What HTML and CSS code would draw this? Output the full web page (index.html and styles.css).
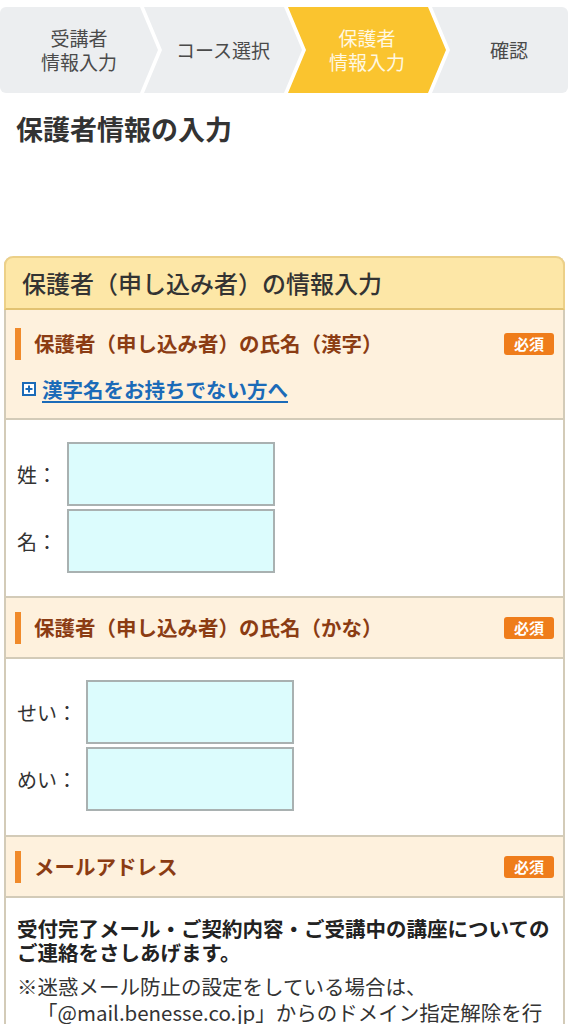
FILE: index.html
```html
<!DOCTYPE html>
<html lang="ja">
<head>
    <meta charset="UTF-8">
    <meta name="viewport" content="width=device-width, initial-scale=1.0">
    <title>保護者情報の入力</title>
    <link rel="stylesheet" href="styles.css">
</head>
<body>

<div class="steps">
    <div class="step step-first">受講者<br>情報入力</div>
    <div class="step">コース選択</div>
    <div class="step step-current">保護者<br>情報入力</div>
    <div class="step step-last">確認</div>
</div>

<h1 class="page-title">保護者情報の入力</h1>

<div class="card">
    <div class="card-head">保護者（申し込み者）の情報入力</div>

    <!-- 氏名（漢字） -->
    <div class="sub-head sub-head-first">
        <div class="sub-row">
            <h3 class="sub-title">保護者（申し込み者）の氏名（漢字）</h3>
            <span class="badge">必須</span>
        </div>
        <div class="toggle">
            <svg class="plus" width="14" height="14" viewBox="0 0 14 14">
                <rect x="1" y="1" width="12" height="12" fill="#fff" stroke="#1b6bb8" stroke-width="2"/>
                <path d="M7 3.5v7M3.5 7h7" stroke="#1b6bb8" stroke-width="2"/>
            </svg>
            <a href="#">漢字名をお持ちでない方へ</a>
        </div>
    </div>
    <div class="fields">
        <div class="field">
            <label for="sei">姓：</label>
            <input type="text" id="sei">
        </div>
        <div class="field">
            <label for="mei">名：</label>
            <input type="text" id="mei">
        </div>
    </div>

    <!-- 氏名（かな） -->
    <div class="sub-head">
        <div class="sub-row">
            <h3 class="sub-title">保護者（申し込み者）の氏名（かな）</h3>
            <span class="badge">必須</span>
        </div>
    </div>
    <div class="fields fields-kana">
        <div class="field">
            <label for="sei-kana">せい：</label>
            <input type="text" id="sei-kana">
        </div>
        <div class="field">
            <label for="mei-kana">めい：</label>
            <input type="text" id="mei-kana">
        </div>
    </div>

    <!-- メールアドレス -->
    <div class="sub-head">
        <div class="sub-row">
            <h3 class="sub-title">メールアドレス</h3>
            <span class="badge">必須</span>
        </div>
    </div>
    <div class="mail-body">
        <p class="lead">受付完了メール・ご契約内容・ご受講中の講座についてのご連絡をさしあげます。</p>
        <p class="note">※迷惑メール防止の設定をしている場合は、<br>「@mail.benesse.co.jp」からのドメイン指定解除を行ってください。</p>
    </div>
</div>

</body>
</html>
```

FILE: styles.css
```css
* {
    box-sizing: border-box;
}
body {
    margin: 0;
    font-family: "Noto Sans CJK JP", "Noto Sans", sans-serif;
    color: #333;
    background-color: #fff;
}

/* steps */
.steps {
    display: flex;
    margin-top: 7px;
    height: 86px;
}
.step {
    flex: none;
    width: 158px;
    display: flex;
    align-items: center;
    justify-content: center;
    text-align: center;
    font-size: 19px;
    line-height: 24px;
    color: #4a4a4a;
    background-color: #eceef0;
    margin-left: -14px;
    clip-path: polygon(0 0, 140px 0, 158px 50%, 140px 100%, 0 100%, 18px 50%);
}
.step-first {
    margin-left: 0;
    border-radius: 6px 0 0 6px;
    clip-path: polygon(0 0, 140px 0, 158px 50%, 140px 100%, 0 100%);
}
.step-current {
    background-color: #fac42f;
    color: #fff8e2;
}
.step-last {
    width: 136px;
    padding-left: 18px;
    border-radius: 0 6px 6px 0;
    clip-path: polygon(0 0, 100% 0, 100% 100%, 0 100%, 18px 50%);
}

.page-title {
    margin: 19px 0 0;
    padding-left: 16px;
    font-size: 27px;
    line-height: 34px;
    font-weight: 700;
    color: #333;
}

/* card */
.card {
    margin: 110px 6px 40px 4px;
    border: 2px solid #d3cbb8;
    border-top: none;
    border-radius: 9px 9px 0 0;
}
.card-head {
    height: 54px;
    display: flex;
    align-items: center;
    padding: 0 16px 2px;
    background-color: #fde7a7;
    border: 2px solid #ecd088;
    border-bottom-color: #e2c372;
    margin: 0 -2px;
    border-radius: 9px 9px 0 0;
    font-size: 24px;
    font-weight: 500;
    color: #333;
}
.sub-head {
    background-color: #fef1dd;
    border-bottom: 2px solid #d3cbb8;
    padding: 14px 9px 13px 9px;
}
.sub-head-first {
    padding-top: 18px;
    padding-bottom: 16px;
}
.sub-row {
    display: flex;
    align-items: center;
    justify-content: space-between;
}
.sub-title {
    margin: 0;
    height: 32px;
    line-height: 31px;
    border-left: 6px solid #f08a2a;
    padding-left: 13px;
    font-size: 20.5px;
    font-weight: 700;
    color: #8b3c13;
}
.badge {
    width: 50px;
    height: 22px;
    line-height: 22px;
    text-align: center;
    border-radius: 3px;
    background-color: #ef7d1b;
    color: #fff;
    font-size: 15px;
    font-weight: 700;
}
.toggle {
    display: flex;
    align-items: center;
    gap: 6px;
    margin-top: 16px;
    padding-left: 7px;
    height: 26px;
}
.toggle a {
    font-size: 20.5px;
    font-weight: 700;
    color: #1b6bb8;
    text-decoration: underline;
    text-underline-offset: 3px;
}
.plus {
    display: block;
}

/* fields */
.fields {
    display: flex;
    flex-direction: column;
    gap: 3px;
    padding: 22px 0 23px 11px;
    border-bottom: 2px solid #d3cbb8;
    background-color: #fff;
}
.fields-kana {
    padding-top: 21px;
    padding-bottom: 24px;
}
.field {
    display: flex;
    align-items: center;
}
.field label {
    width: 50px;
    font-size: 20px;
    color: #333;
}
.fields-kana .field label {
    width: 69px;
}
.field input {
    width: 208px;
    height: 64px;
    border: 2px solid #a9b1b1;
    background-color: #dcfcfd;
    border-radius: 0;
    font-size: 20px;
    padding: 0 8px;
}

/* mail */
.mail-body {
    padding: 18px 11px 24px;
}
.lead {
    margin: 0;
    font-size: 20.5px;
    line-height: 24px;
    font-weight: 700;
    color: #222;
}
.note {
    margin: 9px 0 0;
    font-size: 20.5px;
    line-height: 26px;
    color: #333;
    padding-left: 20px;
    text-indent: -20px;
}
```
